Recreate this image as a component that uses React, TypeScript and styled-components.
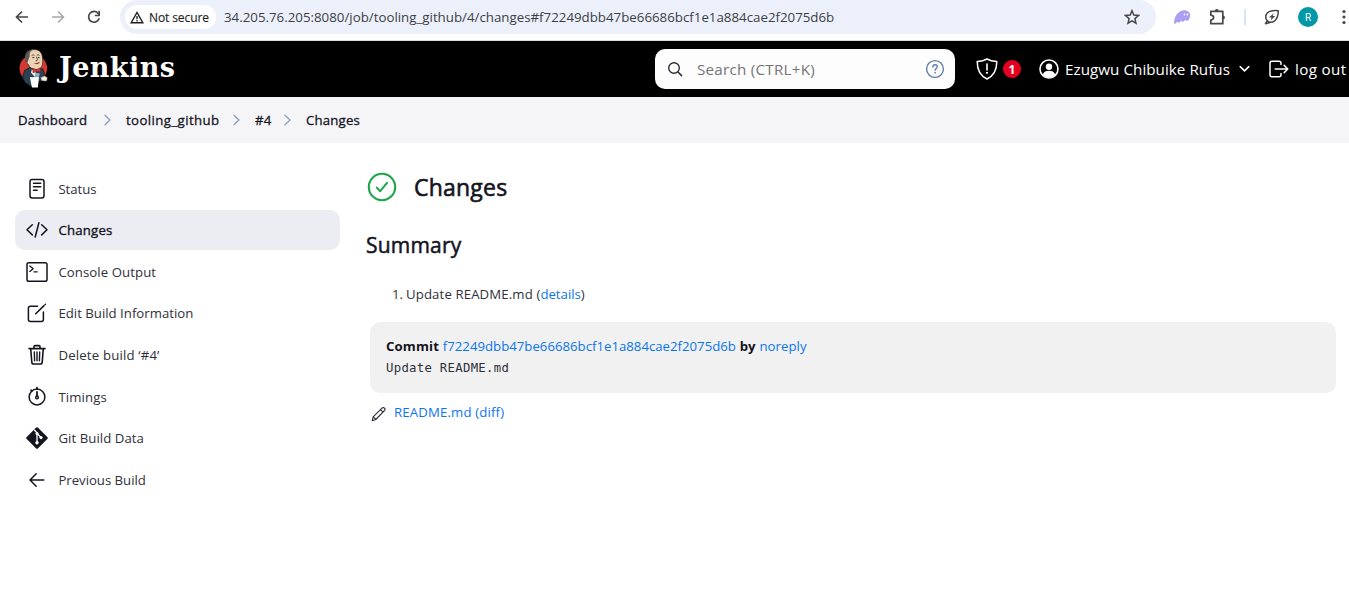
import React from "react";
import styled, { createGlobalStyle } from "styled-components";

const GlobalStyle = createGlobalStyle`
  * { box-sizing: border-box; }
  html, body { margin: 0; padding: 0; background: #fff; overflow: hidden; }
  body { font-family: "Open Sans", "Noto Sans", sans-serif; font-size: 13.2px; color: #14141f; }
  svg { display: block; flex: none; }
  a { color: #0b76ea; text-decoration: none; }
`;

const Label = styled.span<{ $ls?: number }>`
  white-space: nowrap;
  letter-spacing: ${(p) => p.$ls ?? 0}px;
`;

/* Browser toolbar */
const Toolbar = styled.div`
  display: flex;
  align-items: flex-start;
  height: 41px;
  width: 1349px;
  padding-left: 13px;
  border-bottom: 1px solid #dcdcdc;
  background: #fff;
`;
const NavButton = styled.div<{ $color?: string }>`
  display: flex;
  align-items: center;
  justify-content: center;
  width: 18px;
  height: 34px;
  margin-right: 18px;
  color: ${(p) => p.$color ?? "#474747"};
`;
const AddressBar = styled.div`
  display: flex;
  align-items: center;
  width: 1036px;
  height: 34px;
  margin-left: -1px;
  padding: 0 16px 0 5px;
  border-radius: 17px;
  background: #ecf0fa;
`;
const SecurityChip = styled.div`
  display: flex;
  align-items: center;
  gap: 5px;
  width: 91px;
  height: 24px;
  padding-left: 5px;
  border-radius: 12px;
  background: #fff;
  color: #1f1f1f;
  font-size: 12px;
  -webkit-text-stroke: 0.15px;
`;
const Url = styled(Label)`
  flex: 1;
  margin-left: 8px;
  font-size: 13.3px;
  color: #3c3f44;
`;
const Extensions = styled.div`
  display: flex;
  align-items: center;
  height: 34px;
  margin-left: 17px;
`;
const PuzzleSlot = styled.div`
  margin-left: 18px;
`;
const Divider = styled.div`
  width: 2px;
  height: 16px;
  margin: 0 18px 0 17px;
  background: #d3e3fd;
`;
const Profile = styled.div`
  display: flex;
  align-items: center;
  justify-content: center;
  width: 20px;
  height: 20px;
  margin: 0 24px 0 18px;
  border-radius: 50%;
  background: #0097a7;
  color: #fff;
  font: 10px Roboto, sans-serif;
`;

/* Jenkins header */
const Header = styled.header`
  display: flex;
  align-items: center;
  width: 1349px;
  height: 56px;
  padding-left: 18px;
  background: #000;
  color: #fff;
  font-size: 15.2px;
  overflow: hidden;
`;
const Wordmark = styled.div`
  flex: 1;
  margin: -4px 0 0 9px;
  font: 700 27px "DejaVu Serif", serif;
  letter-spacing: 0.42px;
`;
const SearchBox = styled.div`
  display: flex;
  align-items: center;
  width: 300px;
  height: 40px;
  padding: 0 10px 0 12px;
  border-radius: 10px;
  background: #fdfdfd;
  color: #757575;
`;
const SearchText = styled(Label)`
  flex: 1;
  margin-left: 14px;
`;
const Alerts = styled.div`
  display: flex;
  align-items: center;
  gap: 5px;
  margin-left: 21px;
`;
const Count = styled.div`
  display: flex;
  align-items: center;
  justify-content: center;
  width: 18px;
  height: 18px;
  border-radius: 50%;
  background: #e6001f;
  font-size: 12px;
  font-weight: 700;
`;
const UserMenu = styled.div`
  display: flex;
  align-items: center;
  margin-left: 18px;
`;
const UserName = styled(Label)`
  width: 165px;
  margin: 0 9px 0 6px;
`;
const LogOut = styled.div`
  display: flex;
  align-items: center;
  gap: 6px;
  width: 80px;
  margin-left: 19px;
`;

/* Breadcrumbs */
const Crumbs = styled.nav`
  display: flex;
  align-items: center;
  height: 46px;
  padding-left: 18px;
  background: #f5f5f8;
  -webkit-text-stroke: 0.3px;
`;
const Crumb = styled(Label)<{ $w: number }>`
  width: ${(p) => p.$w}px;
`;
const CrumbArrow = styled.div`
  display: flex;
  justify-content: center;
  width: 9px;
  margin: 0 14px 0 15px;
`;

/* Page body */
const Page = styled.div`
  display: flex;
`;
const Sidebar = styled.aside`
  display: flex;
  flex-direction: column;
  gap: 1.65px;
  width: 340px;
  padding: 25.55px 0 0 15px;
`;
const Task = styled.div<{ $active?: boolean }>`
  display: flex;
  align-items: center;
  gap: 10.4px;
  height: 40px;
  padding-left: 11px;
  border-radius: 10px;
  background: ${(p) => (p.$active ? "#ecedf3" : "transparent")};
  color: ${(p) => (p.$active ? "#14141f" : "#30303a")};
  -webkit-text-stroke: ${(p) => (p.$active ? "0.35px" : "0")};
  svg { color: #14141f; }
`;
const Main = styled.main`
  flex: 1;
  padding: 29px 13px 0 26px;
`;
const TitleRow = styled.div`
  display: flex;
  align-items: center;
  gap: 17px;
  height: 30px;
  padding-left: 1px;
`;
const Heading = styled.h1`
  margin: 0;
  font-size: 23px;
  font-weight: 400;
  line-height: 30px;
  letter-spacing: 0.22px;
  -webkit-text-stroke: 0.6px;
`;
const SubHeading = styled.h2`
  margin: 28px 0 0;
  font-size: 21px;
  font-weight: 400;
  line-height: 30px;
  letter-spacing: 0.2px;
  -webkit-text-stroke: 0.5px;
`;
const ChangeLine = styled.div`
  display: flex;
  height: 20px;
  margin: 24px 0 0 26px;
  line-height: 20px;
  color: #30303a;
`;
const Ordinal = styled.span`
  width: 14px;
`;
const Commit = styled.section`
  height: 71px;
  margin: 18px 0 0 4px;
  padding: 14px 16px 0;
  border-radius: 10px;
  background: #f1f1f1;
`;
const CommitTitle = styled.div`
  display: flex;
  gap: 3.7px;
  height: 20px;
  line-height: 20px;
  b { font-weight: 700; letter-spacing: 0.15px; }
`;
const CommitMessage = styled.pre`
  margin: 3px 0 0;
  font: 12.3px/18px "DejaVu Sans Mono", monospace;
  letter-spacing: 0.29px;
  color: #30303a;
`;
const FileRow = styled.div`
  display: flex;
  align-items: center;
  gap: 8px;
  height: 20px;
  margin: 9px 0 0 5px;
`;
const PencilSlot = styled.div`
  padding-top: 3px;
`;

const stroke = (w = 1.5) => ({
  fill: "none",
  stroke: "currentColor",
  strokeWidth: w,
  strokeLinecap: "round" as const,
  strokeLinejoin: "round" as const,
});

const Butler = () => (
  <svg width="32" height="42" viewBox="0 0 32 42">
    <ellipse cx="15.3" cy="20.2" rx="13.8" ry="13.5" fill="#d33833" />
    <path d="M6.5 22.5 4.6 30l3 5.2 3 1.3.8 1.4h8.4l1.2-4.6 4-1 1.5-6-1.5-5-5-1.800H12z" fill="#2a4354" stroke="#12181c" strokeWidth=".8" />
    <path d="M8.200 8.500C8.500 4 12 1.400 16.800 1.600c5 .2 7.500 3.600 7.700 8.600.2 3 .6 5.500-.8 8.200-1.400 2.400-3.400 3.300-5.600 3.100-3.600-.3-7-2-7.800-5.200-2-.6-2.900-2.600-2-4.300z" fill="#ecd3b5" stroke="#2b221c" strokeWidth=".7" />
    <path d="M7.600 13.500C5.600 7 8.500 1.600 15.500 1.200c-3.400 1.800-4.300 4-3.700 6.800l-1.500 4-.9 3.200z" fill="#5f5754" />
    <path d="M13.600 7.600c.8-.8 1.900-.8 2.800-.2M18.800 7.400c.8-.7 1.900-.7 2.700 0M18.300 8.700c.6 1.600 1.700 2.800.8 3.900l-1.400.2" fill="none" stroke="#4a3728" strokeWidth=".9" />
    <path d="M14.300 9.600h1.900M19.800 9.600h1.800" stroke="#33261d" strokeWidth="1" />
    <path d="M15.800 14.800c2.200.6 4.500 0 6.200-1.300-.4 2.400-3.600 4-6.200 1.300z" fill="#7c4436" />
    <path d="m13.800 21.500 4 1.200-.3 7-4.500-5z" fill="#e8eef2" />
    <path d="m14.500 20 3.600 1.800 3.800-1.900.8 4.200-3.800-.9-3.800 1.700z" fill="#d33833" stroke="#7d1512" strokeWidth=".4" />
    <path d="m17.500 25 4.300.3-.7 3.400-3 .2z" fill="#8fb0c4" />
    <path d="m11.900 29.300 9.100-.3-1.200 10.400h-5.900z" fill="#fff" />
    <path d="m22.800 29.600 3.800-1.700 2.600 1.600-.3 3.200-2.600.4-2.600-.6z" fill="#f4ecdf" stroke="#777" strokeWidth=".4" />
  </svg>
);

const Chevron = () => (
  <CrumbArrow>
    <svg width="9" height="12" viewBox="0 0 9 12" color="#8d9fc0"><path d="m2 1.2 5 4.8-5 4.8" {...stroke(1.3)} /></svg>
  </CrumbArrow>
);

const tasks: { label: string; ls: number; icon: React.ReactNode; active?: boolean }[] = [
  { label: "Status", ls: -0.05, icon: (
    <g {...stroke()}><rect x="4" y="1.5" width="14" height="18.5" rx="2.2" /><path d="M7.5 5.3h7.2M7.5 8.7h7.2M7.5 12.2h3.6" /></g>
  ) },
  { label: "Changes", ls: 0.22, active: true, icon: (
    <g {...stroke()}><path d="M6.3 5.7 1 10.8l5.3 5.1M15.7 5.7l5.3 5.1-5.3 5.1M12.9 3.8 9.2 18" /></g>
  ) },
  { label: "Console Output", ls: 0.08, icon: (
    <g {...stroke()}><rect x="1" y="1.7" width="20" height="18.6" rx="1.8" /><path d="m3.8 5 3.4 2.7-3.4 2.7M8 10.8h3.2" strokeWidth="1.3" /></g>
  ) },
  { label: "Edit Build Information", ls: 0.01, icon: (
    <g {...stroke()}><path d="M11.6 4.2H4.4a2 2 0 0 0-2 2v11.3a2 2 0 0 0 2 2h11a2 2 0 0 0 2-2v-7.5M9.7 11.7 18 3.6" /><path d="m19.1 2.5.3-.3" /></g>
  ) },
  { label: "Delete build ‘#4’", ls: 0.18, icon: (
    <g {...stroke(1.6)}><path d="M3 4.6h16M4.7 4.8l1.1 13.3c.1 1.2.9 1.9 2 1.9h6.4c1.1 0 1.9-.7 2-1.9l1.1-13.3M8 4.3V2.6c0-.6.4-1 1-1h4c.6 0 1 .4 1 1v1.7" /><path d="M8.3 8l.3 8.8M11 8v8.8M13.7 8l-.3 8.8" strokeWidth="1.4" /></g>
  ) },
  { label: "Timings", ls: 0.12, icon: (
    <g {...stroke()}><circle cx="11" cy="11" r="7.9" /><circle cx="11" cy="11.4" r="1.3" /><path d="M11 6v4M11 1.7v1.2M5.1 4.3l.6.7" strokeWidth="1.8" /></g>
  ) },
  { label: "Git Build Data", ls: 0.06, icon: (
    <g>
      <path d="M9.9.7a1.6 1.6 0 0 1 2.2 0l9.2 9.2a1.6 1.6 0 0 1 0 2.2l-9.2 9.2a1.6 1.6 0 0 1-2.2 0L.7 12.1a1.6 1.6 0 0 1 0-2.2z" fill="#14141f" />
      <path d="m8.2 2.7 2.8 3v10M11 6.2l4 4.4" fill="none" stroke="#fff" strokeWidth="1.3" />
      <circle cx="11" cy="6.4" r="1.5" fill="#fff" /><circle cx="15" cy="10.6" r="1.6" fill="#fff" /><circle cx="11" cy="15.8" r="1.7" fill="#fff" />
    </g>
  ) },
  { label: "Previous Build", ls: -0.02, icon: (
    <g {...stroke()}><path d="M17.800 11H4.200M10.200 4.800 4 11l6.200 6.200" /></g>
  ) },
];

export default function App() {
  return (
    <>
      <GlobalStyle />
      <Toolbar>
        <NavButton><svg width="14" height="14" viewBox="0 0 14 14"><path d="M13 7H2M7 1.5 1.5 7 7 12.5" {...stroke(1.7)} strokeLinecap="butt" strokeLinejoin="miter" /></svg></NavButton>
        <NavButton $color="#a8a8a8"><svg width="14" height="14" viewBox="0 0 14 14"><path d="M1 7h11M7 1.5 12.5 7 7 12.5" {...stroke(1.6)} strokeLinecap="butt" strokeLinejoin="miter" /></svg></NavButton>
        <NavButton><svg width="14" height="14" viewBox="0 0 14 14"><path d="M12.2 8.3A5.4 5.4 0 1 1 11.4 3.7L12.6 5" {...stroke(1.7)} strokeLinecap="butt" /><path d="M13 .8v5.4H7.8V4.7h3.6V.8z" fill="currentColor" /></svg></NavButton>
        <AddressBar>
          <SecurityChip>
            <svg width="14" height="13" viewBox="0 0 14 13"><path d="M7 1.5 1.2 11.7h11.6z" {...stroke(1.4)} strokeLinejoin="miter" /><path d="M7 5v3.2M7 9.1v1.4" stroke="#1f1f1f" strokeWidth="1.3" /></svg>
            <Label $ls={-0.1}>Not secure</Label>
          </SecurityChip>
          <Url>34.205.76.205:8080/job/tooling_github/4/changes#f72249dbb47be66686bcf1e1a884cae2f2075d6b</Url>
          <svg width="16" height="16" viewBox="0 0 16 16" color="#474747"><path d="m8 1.7 1.8 4.4 4.7.4-3.6 3.1 1.1 4.6L8 11.8l-4 2.4 1.1-4.6-3.6-3.1 4.7-.4z" {...stroke(1.5)} strokeLinejoin="miter" /></svg>
        </AddressBar>
        <Extensions>
          <svg width="18" height="16" viewBox="0 0 18 16"><path d="M1 13.400C1.500 7.500 5 1.600 11 1.200c4-.1 6.300 2.300 6.100 5.400-.1 2.700-1.400 5.300-3.100 5.300-.9 0-1-.8-1.700-.8-.8 0-1 1.700-2.300 1.700-1 0-1.100-.8-1.800-.8-.9 0-1.200 1.700-2.400 1.700-.9 0-1-.8-1.600-.7C3.400 13.200 2.900 14.700 1.900 14.700 1.300 14.700.9 14.200 1 13.400z" fill="#ab9ff2" /><ellipse cx="11.500" cy="5.500" rx=".8" ry="1.100" fill="#fff" /><ellipse cx="14.400" cy="5.500" rx=".8" ry="1.100" fill="#fff" /></svg>
          <PuzzleSlot>
            <svg width="18" height="18" viewBox="0 0 18 18" color="#474747">
              <path d="M1.800 3.300h12v12.400h-12v-3.600c2-.2 2.800-1.300 2.800-2.500S3.800 7.400 1.800 7.100z" {...stroke(1.700)} />
              <path d="M5.900 3a1.900 1.900 0 0 1 3.800 0zM14 7.600a1.900 1.900 0 0 1 0 3.800z" fill="currentColor" />
            </svg>
          </PuzzleSlot>
          <Divider />
          <svg width="16" height="16" viewBox="0 0 16 16" color="#474747"><path d="M14.300 1.700c-5-.4-9 .2-11 2.300-2.100 2.200-2 5.600-.2 7.700 2.100 2 5.800 2.100 8-.2 2.300-2.400 3.200-5.300 3.200-9.800zM3.300 11.500l-1.800 3.200 5.200-1.400" {...stroke(1.5)} /><path d="M9.600 4.300 5 8.600h2.600l-.9 3 4.500-4.500H8.700z" fill="currentColor" /></svg>
          <Profile>R</Profile>
          <svg width="4" height="16" viewBox="0 0 4 16" fill="#474747"><circle cx="2" cy="2.500" r="1.600" /><circle cx="2" cy="8" r="1.600" /><circle cx="2" cy="13.500" r="1.600" /></svg>
        </Extensions>
      </Toolbar>

      <Header>
        <Butler />
        <Wordmark>Jenkins</Wordmark>
        <SearchBox>
          <svg width="16" height="16" viewBox="0 0 16 16" color="#2b2b3a"><circle cx="7" cy="7" r="5.300" {...stroke(1.4)} /><path d="m11 11 3.600 3.600" {...stroke(1.5)} /></svg>
          <SearchText $ls={0.25}>Search (CTRL+K)</SearchText>
          <svg width="20" height="20" viewBox="0 0 20 20" color="#5f7fa8"><circle cx="10" cy="10" r="8.400" {...stroke(1.4)} /><path d="M7.800 8c0-1.400 1-2.200 2.300-2.200s2.200.8 2.200 2c0 1.500-2.200 1.700-2.200 3.400" {...stroke(1.4)} /><circle cx="10.100" cy="13.600" r=".9" fill="currentColor" /></svg>
        </SearchBox>
        <Alerts>
          <svg width="22" height="22" viewBox="0 0 22 22"><path d="M11 1c-3 1.800-6.300 2.400-9.800 2.600C1.200 11.500 3.300 17.500 11 21c7.700-3.500 9.800-9.500 9.800-17.400C17.300 3.400 14 2.800 11 1z" {...stroke(1.5)} /><path d="M11 6v6" {...stroke(1.6)} /><circle cx="11" cy="14.800" r="1.100" fill="#fff" /></svg>
          <Count>1</Count>
        </Alerts>
        <UserMenu>
          <svg width="20" height="20" viewBox="0 0 20 20"><circle cx="10" cy="10" r="9" {...stroke(1.6)} /><circle cx="10" cy="7.800" r="3.200" fill="#fff" /><path d="M3.700 15.400c1.200-2.600 3.300-3.700 6.300-3.700s5.100 1.100 6.300 3.700A8.300 8.300 0 0 1 10 18.500a8.300 8.300 0 0 1-6.300-3.100z" fill="#fff" /></svg>
          <UserName $ls={0.04}>Ezugwu Chibuike Rufus</UserName>
          <svg width="11" height="8" viewBox="0 0 11 8"><path d="m1.200 1.600 4.300 4.300 4.300-4.300" {...stroke(1.5)} /></svg>
        </UserMenu>
        <LogOut>
          <svg width="20" height="18" viewBox="0 0 20 18"><path d="M12 4.600V3.200c0-1.200-.8-2-2-2H3c-1.200 0-2 .8-2 2v11.600c0 1.200.8 2 2 2h7c1.200 0 2-.8 2-2v-1.400M6.200 9h12.600M15.200 5.400 18.800 9l-3.600 3.600" {...stroke(1.5)} /></svg>
          <Label $ls={0.35}>log out</Label>
        </LogOut>
      </Header>

      <Crumbs>
        <Crumb $w={70} $ls={0.13}>Dashboard</Crumb>
        <Chevron />
        <Crumb $w={91} $ls={0.42}>tooling_github</Crumb>
        <Chevron />
        <Crumb $w={13} $ls={0.2}>#4</Crumb>
        <Chevron />
        <Crumb $w={60} $ls={0.2}>Changes</Crumb>
      </Crumbs>

      <Page>
        <Sidebar>
          {tasks.map((t) => (
            <Task key={t.label} $active={t.active}>
              <svg width="22" height="22" viewBox="0 0 22 22">{t.icon}</svg>
              <Label $ls={t.ls}>{t.label}</Label>
            </Task>
          ))}
        </Sidebar>
        <Main>
          <TitleRow>
            <svg width="30" height="30" viewBox="0 0 30 30" color="#1ea64b"><circle cx="15" cy="15" r="13.200" {...stroke(2.1)} /><path d="m9.800 15.600 3.400 3.600 6.800-8.400" {...stroke(2)} /></svg>
            <Heading>Changes</Heading>
          </TitleRow>
          <SubHeading>Summary</SubHeading>
          <ChangeLine>
            <Ordinal>1.</Ordinal>
            <Label $ls={0.12}>Update README.md (</Label>
            <a><Label>details</Label></a>
            <Label>)</Label>
          </ChangeLine>
          <Commit>
            <CommitTitle>
              <b>Commit</b>
              <a><Label $ls={0.01}>f72249dbb47be66686bcf1e1a884cae2f2075d6b</Label></a>
              <b>by</b>
              <a><Label $ls={0.05}>noreply</Label></a>
            </CommitTitle>
            <CommitMessage>Update README.md</CommitMessage>
          </Commit>
          <FileRow>
            <PencilSlot>
              <svg width="15" height="16" viewBox="0 0 15 16" color="#2b2b3a"><path d="m1.200 14.800 1-4 8.700-8.600c.8-.8 2-.8 2.600-.1.700.7.700 1.800-.1 2.600l-8.600 8.800zM9.500 3.700l2.500 2.500M2.300 10.900l2.400 2.400" {...stroke(1.1)} /></svg>
            </PencilSlot>
            <a><Label $ls={0.15}>README.md (diff)</Label></a>
          </FileRow>
        </Main>
      </Page>
    </>
  );
}
